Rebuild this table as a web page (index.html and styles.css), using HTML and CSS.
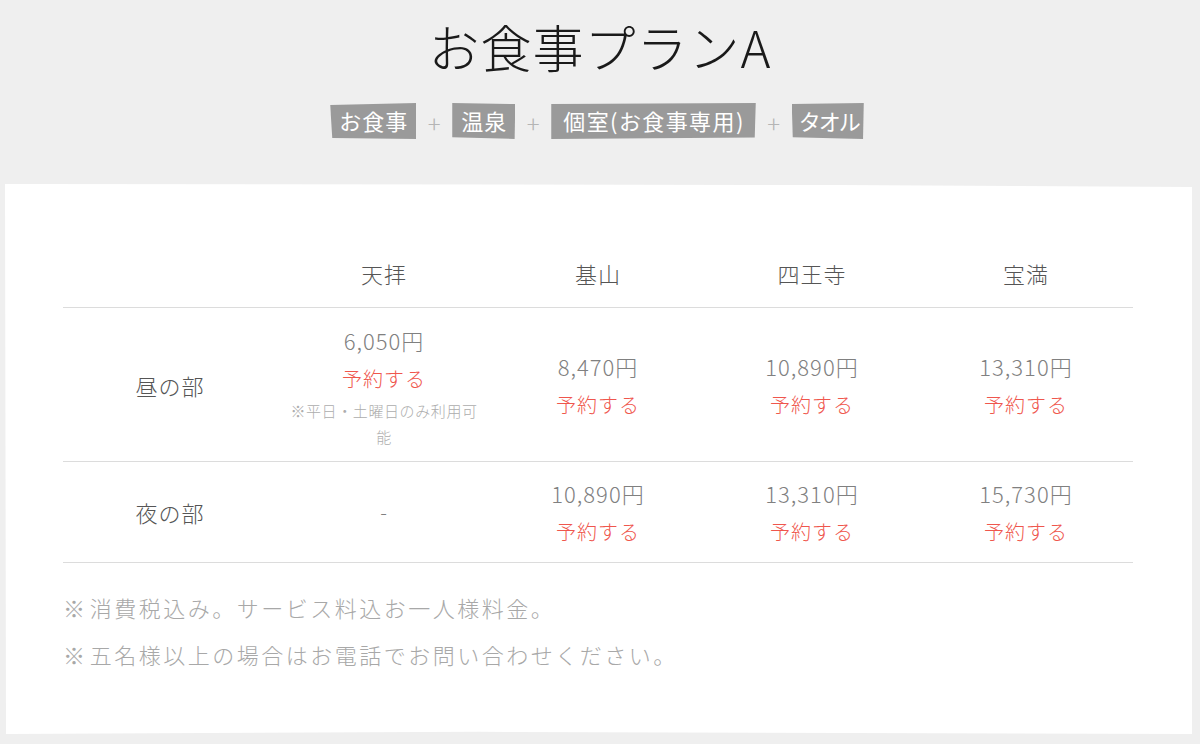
FILE: index.html
```html
<!DOCTYPE html>
<html lang="ja">
<head>
<meta charset="utf-8">
<title>お食事プランA</title>
<link rel="stylesheet" href="styles.css">
</head>
<body>
<header class="plan-head">
  <h1 class="plan-title">お食事プランA</h1>
  <div class="tags">
    <span class="tag tag-a">お食事</span>
    <span class="plus">+</span>
    <span class="tag tag-b">温泉</span>
    <span class="plus">+</span>
    <span class="tag tag-c">個室(お食事専用)</span>
    <span class="plus">+</span>
    <span class="tag tag-d">タオル</span>
  </div>
</header>
<main class="card">
  <table class="price-table">
    <thead>
      <tr>
        <th class="col-label"></th>
        <th>天拝</th>
        <th>基山</th>
        <th>四王寺</th>
        <th>宝満</th>
      </tr>
    </thead>
    <tbody>
      <tr class="row-day">
        <th class="row-label">昼の部</th>
        <td>
          <div class="price">6,050円</div>
          <a class="reserve" href="#">予約する</a>
          <div class="cond">※平日・土曜日のみ利用可能</div>
        </td>
        <td><div class="price">8,470円</div><a class="reserve" href="#">予約する</a></td>
        <td><div class="price">10,890円</div><a class="reserve" href="#">予約する</a></td>
        <td><div class="price">13,310円</div><a class="reserve" href="#">予約する</a></td>
      </tr>
      <tr>
        <th class="row-label">夜の部</th>
        <td><div class="dash">-</div></td>
        <td><div class="price">10,890円</div><a class="reserve" href="#">予約する</a></td>
        <td><div class="price">13,310円</div><a class="reserve" href="#">予約する</a></td>
        <td><div class="price">15,730円</div><a class="reserve" href="#">予約する</a></td>
      </tr>
    </tbody>
  </table>
  <ul class="notes">
    <li>※ 消費税込み。サービス料込お一人様料金。</li>
    <li>※ 五名様以上の場合はお電話でお問い合わせください。</li>
  </ul>
</main>
</body>
</html>
```
FILE: styles.css
```css
* { box-sizing: border-box; }
html, body { margin: 0; padding: 0; }
body {
  background: #efefef;
  font-family: "Noto Sans CJK JP", "Noto Sans", sans-serif;
  font-weight: 300;
  letter-spacing: 1px;
  color: #555;
  width: 1200px;
  height: 744px;
  overflow: hidden;
}
.plan-head {
  padding-top: 10px;
  display: flex;
  flex-direction: column;
  align-items: center;
}
.plan-title {
  margin: 0;
  font-size: 51px;
  line-height: 72px;
  font-weight: 300;
  color: #1a1a1a;
  letter-spacing: 1px;
}
.tags {
  margin-top: 21px;
  margin-right: 6px;
  display: flex;
  align-items: center;
  height: 36px;
}
.tag {
  background: #9a9a9a;
  color: #fff;
  font-size: 22px;
  line-height: 35px;
  height: 36px;
  padding: 0 8px 0 9px;
  font-weight: 400;
}
.tag-a { clip-path: polygon(0 2px, 100% 0, 100% 100%, 2px 97%); }
.tag-b { clip-path: polygon(0 0, 100% 1px, 99% 100%, 0 95%); }
.tag-c {
  clip-path: polygon(0 1px, 100% 0, 99.5% 96%, 0 100%);
  padding: 0 11px 0 12px;
  letter-spacing: 1.4px;
}
.tag-d {
  clip-path: polygon(0 1px, 100% 0, 99% 100%, 1px 95%);
  padding: 0 5px 0 7px;
  letter-spacing: -2px;
}
.plus {
  width: 36px;
  text-align: center;
  color: #b5b5b5;
  font-size: 24px;
  font-weight: 200;
  letter-spacing: 0;
  line-height: 36px;
  padding-top: 4px;
}
.card {
  margin: 45px 0 0 5px;
  width: 1187px;
  background: #fff;
  padding: 55px 59px 56px 58px;
  clip-path: polygon(0 0, 70% 1px, 100% 3px, 100% 100%, 40% 99.6%, 1px 100%);
}
.price-table {
  width: 100%;
  border-collapse: collapse;
  table-layout: fixed;
}
.price-table th,
.price-table td {
  text-align: center;
  vertical-align: middle;
  font-weight: 300;
}
.price-table thead th {
  font-size: 22px;
  line-height: 40px;
  color: #555;
  padding: 14px 0;
  border-bottom: 1px solid #dcdcdc;
}
.price-table tbody tr { border-bottom: 1px solid #dcdcdc; }
.price-table tbody td,
.price-table tbody th {
  padding: 11px 8px;
}
.price-table .row-day td,
.price-table .row-day th {
  padding-top: 12px;
}
.row-label {
  font-size: 22px;
  line-height: 40px;
  color: #555;
}
.price {
  font-size: 22px;
  line-height: 40px;
  color: #808080;
}
.reserve {
  display: block;
  font-size: 20px;
  line-height: 38px;
  color: #ef564d;
  text-decoration: none;
}
.cond {
  font-size: 15px;
  line-height: 26px;
  letter-spacing: 0.6px;
  color: #adadad;
}
.dash {
  font-size: 20px;
  line-height: 40px;
  color: #808080;
}
.notes {
  list-style: none;
  margin: 21px 0 0;
  padding: 0;
  font-size: 22px;
  line-height: 47px;
  letter-spacing: 2.5px;
  word-spacing: -5px;
  color: #a8a8a8;
}
```
